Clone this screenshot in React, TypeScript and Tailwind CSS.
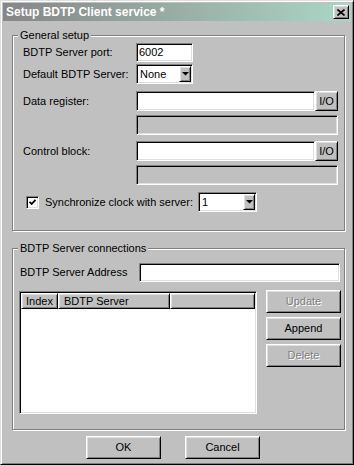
import React from 'react';

// classic Win9x 3D edges
const sunken =
  'border border-t-[#808080] border-l-[#808080] border-r-white border-b-white shadow-[inset_1px_1px_0_#000,inset_-1px_-1px_0_#dfdfdf]';
const raised =
  'border border-t-white border-l-white border-r-black border-b-black shadow-[inset_1px_1px_0_#dfdfdf,inset_-1px_-1px_0_#808080]';
const groupBox =
  'relative ml-[9px] w-[333px] border border-[#808080] shadow-[1px_1px_0_#fff,inset_1px_1px_0_#fff]';

function Btn({ label, disabled, className }: { label: string; disabled?: boolean; className: string }) {
  return (
    <button
      type="button"
      className={`${raised} ${className} flex items-center justify-center bg-[#c0c0c0] ${
        disabled ? 'text-[#808080] [text-shadow:1px_1px_0_#fff]' : 'text-black'
      }`}
    >
      {label}
    </button>
  );
}

function Arrow() {
  return (
    <svg width="7" height="4" viewBox="0 0 7 4">
      <path d="M0 0H7L3.5 3.6Z" fill="#000" />
    </svg>
  );
}

function Combo({ value, className }: { value: string; className: string }) {
  return (
    <div className={`${sunken} ${className} h-[20px] p-[1px] bg-white flex items-center`}>
      <span className="flex-1 pl-[2px]">{value}</span>
      <div className={`${raised} w-[12px] h-[16px] bg-[#c0c0c0] flex items-center justify-center`}>
        <Arrow />
      </div>
    </div>
  );
}

function Legend({ text }: { text: string }) {
  return <span className="absolute -top-[7px] left-[5px] px-[2px] bg-[#c0c0c0] leading-[13px]">{text}</span>;
}

export default function App() {
  return (
    <div className="w-[354px] h-[465px] bg-[#c0c0c0] border border-t-[#dfdfdf] border-l-[#dfdfdf] border-r-black border-b-black shadow-[inset_1px_1px_0_#fff,inset_-1px_-1px_0_#808080] p-[2px] font-['Liberation_Sans',Arial,sans-serif] text-[11px] leading-[13px] text-black select-none">
      {/* Title bar */}
      <div className="h-[18px] flex items-center bg-linear-to-r from-[#868686] to-[#a8d8c6] pl-[3px] pr-[2px]">
        <span className="flex-1 text-white font-bold text-[12px]">Setup BDTP Client service *</span>
        <div className={`${raised} w-[16px] h-[14px] bg-[#c0c0c0] flex items-center justify-center`}>
          <svg width="8" height="7" viewBox="0 0 8 7">
            <path d="M0.5 0.5L7.5 6.5M7.5 0.5L0.5 6.5" stroke="#000" strokeWidth="1.6" />
          </svg>
        </div>
      </div>

      {/* General setup */}
      <div className={`${groupBox} mt-[14px] pt-[7px] pb-[18px] pl-[10px] pr-[6px]`}>
        <Legend text="General setup" />
        <div className="flex flex-col">
          <div className="flex items-center h-[19px]">
            <span className="w-[113px]">BDTP Server port:</span>
            <div className={`${sunken} w-[57px] h-[19px] bg-white pl-[2px] flex items-center`}>6002</div>
          </div>
          <div className="flex items-center h-[20px] mt-[2px]">
            <span className="w-[113px]">Default BDTP Server:</span>
            <Combo value="None" className="w-[57px]" />
          </div>
          <div className="flex items-center h-[20px] mt-[7px]">
            <span className="w-[113px]">Data register:</span>
            <div className={`${sunken} w-[179px] h-[20px] bg-white`} />
            <Btn label="I/O" className="w-[23px] h-[20px]" />
          </div>
          <div className="flex h-[20px] mt-[4px] pl-[113px]">
            <div className={`${sunken} w-[202px] h-[20px] bg-[#c0c0c0]`} />
          </div>
          <div className="flex items-center h-[20px] mt-[6px]">
            <span className="w-[113px]">Control block:</span>
            <div className={`${sunken} w-[179px] h-[20px] bg-white`} />
            <Btn label="I/O" className="w-[23px] h-[20px]" />
          </div>
          <div className="flex h-[20px] mt-[4px] pl-[113px]">
            <div className={`${sunken} w-[202px] h-[20px] bg-[#c0c0c0]`} />
          </div>
          <div className="flex items-center h-[20px] mt-[7px]">
            <div className={`${sunken} ml-[3px] w-[13px] h-[13px] bg-white flex items-center justify-center`}>
              <svg width="7" height="7" viewBox="0 0 7 7">
                <path d="M0.5 2.8L2.6 4.9L6.5 1" stroke="#000" strokeWidth="1.8" fill="none" />
              </svg>
            </div>
            <span className="ml-[6px] w-[153px]">Synchronize clock with server:</span>
            <Combo value="1" className="w-[59px]" />
          </div>
        </div>
      </div>

      {/* BDTP Server connections */}
      <div className={`${groupBox} mt-[17px] pt-[14px] pb-[15px] pl-[6px] pr-[3px]`}>
        <Legend text="BDTP Server connections" />
        <div className="flex items-center h-[19px]">
          <span className="ml-[1px] w-[119px]">BDTP Server Address</span>
          <div className={`${sunken} w-[201px] h-[19px] bg-white`} />
        </div>
        <div className="flex items-start mt-[8px]">
          <div className={`${sunken} mt-[1px] w-[238px] h-[123px] p-[1px] bg-white`}>
            <div className="flex h-[16px]">
              <div className={`${raised} w-[37px] bg-[#c0c0c0] pl-[4px] flex items-center`}>Index</div>
              <div className={`${raised} w-[112px] bg-[#c0c0c0] pl-[5px] flex items-center`}>BDTP Server</div>
              <div className={`${raised} flex-1 bg-[#c0c0c0]`} />
            </div>
          </div>
          <div className="ml-[9px] flex flex-col gap-[4px]">
            <Btn label="Update" disabled className="w-[75px] h-[23px]" />
            <Btn label="Append" className="w-[75px] h-[23px]" />
            <Btn label="Delete" disabled className="w-[75px] h-[23px]" />
          </div>
        </div>
      </div>

      {/* Footer */}
      <div className="flex mt-[6px] pl-[83px] gap-[24px]">
        <Btn label="OK" className="w-[75px] h-[23px]" />
        <Btn label="Cancel" className="w-[75px] h-[23px]" />
      </div>
    </div>
  );
}
